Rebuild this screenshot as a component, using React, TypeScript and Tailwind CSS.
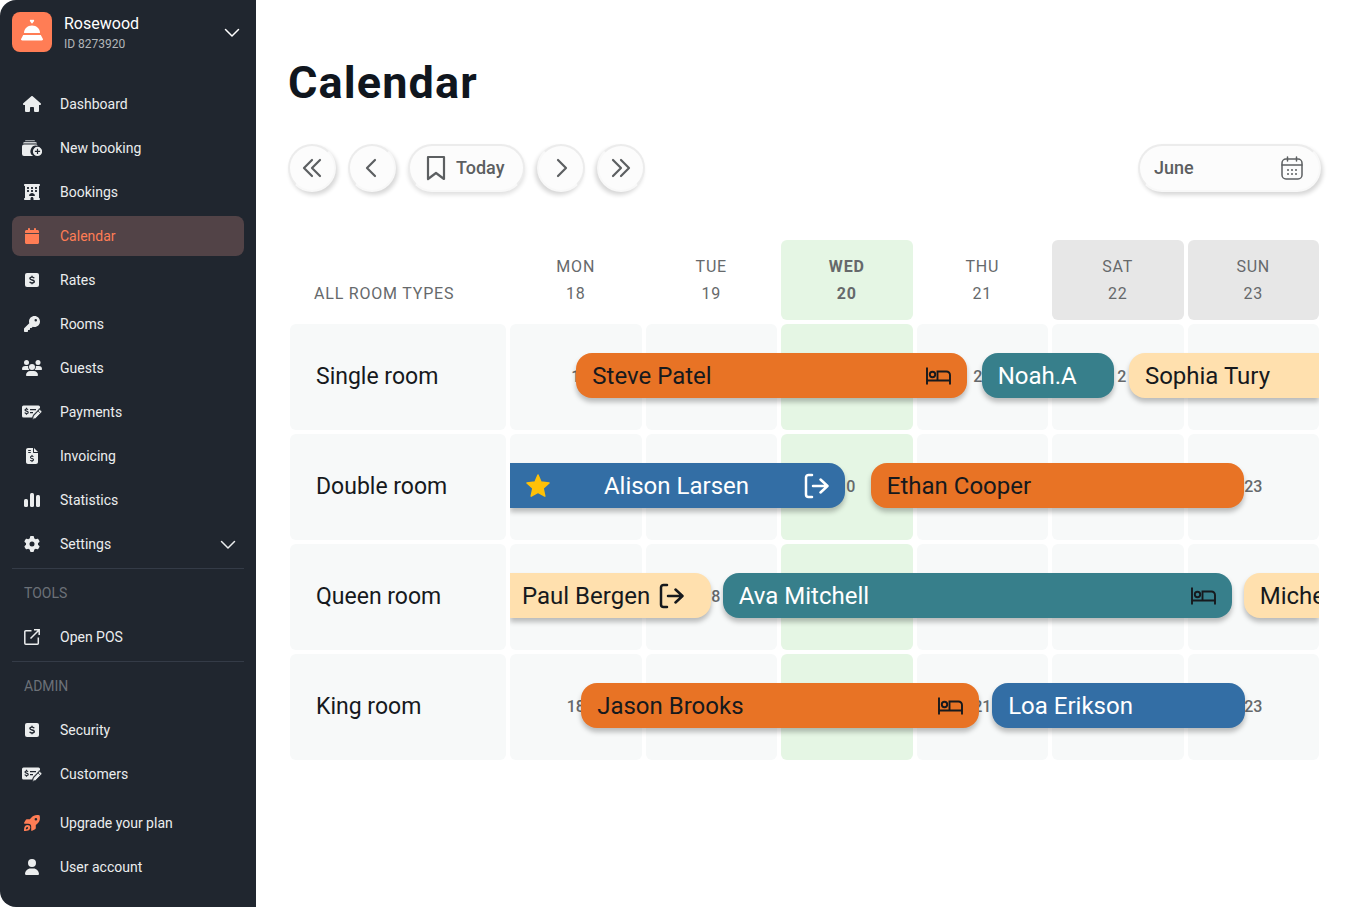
import React, { useState } from "react";
import {
  FaCalendar,
  FaFileInvoiceDollar,
  FaGear,
  FaHotel,
  FaHouse,
  FaKey,
  FaUser,
} from "react-icons/fa6";

interface IconProps {
  className?: string;
}

interface NavEntry {
  label: string;
  icon: React.ReactNode;
  active?: boolean;
  expandable?: boolean;
}

interface Booking {
  guest: string;
  start: number; // percent of the visible week
  span: number;
  color: "orange" | "teal" | "blue" | "sand";
  startsBefore?: boolean;
  endsAfter?: boolean;
  starred?: boolean;
  inHouse?: boolean;
  checkOut?: boolean;
}

interface RoomRow {
  name: string;
  days: string[];
  bookings: Booking[];
}

const ChevronDown: React.FC<IconProps> = ({ className }) => (
  <svg viewBox="0 0 16 16" className={className} fill="none" stroke="currentColor" strokeWidth="1.5" strokeLinecap="round" strokeLinejoin="round">
    <path d="M1.5 5.500 8 12l6.500-6.500" />
  </svg>
);

const BellIcon: React.FC<IconProps> = ({ className }) => (
  <svg viewBox="0 0 24 24" className={className} fill="currentColor">
    <path d="M12 5.800 10 3.200C9.300 2 10.800 1.200 12 2.100c1.200-.9 2.700-.1 2 1.100Z" />
    <path d="M4 15C4 10.700 7.400 7.400 12 7.400s8 3.300 8 7.600Z" />
    <path d="M3.200 17h17.600l2 3.800c.5 1-.1 1.700-1.200 1.700H2.400c-1.100 0-1.700-.7-1.200-1.700Z" />
  </svg>
);

const NewBookingIcon: React.FC<IconProps> = ({ className }) => (
  <svg viewBox="0 0 20 16" className={className} fill="currentColor">
    <path d="M4 0h8a1 1 0 0 1 1 1v.2H3V1a1 1 0 0 1 1-1Z" opacity=".6" />
    <path d="M2.500 2h11A1.500 1.500 0 0 1 15 3.500V3.600H1v-.1A1.500 1.500 0 0 1 2.500 2Z" opacity=".85" />
    <path d="M2 4.600h12a2 2 0 0 1 1.600 1.200A5.600 5.600 0 0 0 11.200 16H2a2 2 0 0 1-2-2V6.600a2 2 0 0 1 2-2Z" />
    <path fillRule="evenodd" d="M15.500 6.800a4.600 4.600 0 1 1 0 9.200 4.600 4.600 0 0 1 0-9.200Zm-.6 2v2h-2v1.200h2v2h1.200v-2h2v-1.200h-2v-2Z" />
  </svg>
);

const RateIcon: React.FC<IconProps> = ({ className }) => (
  <svg viewBox="0 0 14 14" className={className}>
    <rect width="14" height="14" rx="2" fill="currentColor" />
    <path d="M9.200 5.200C8.900 4.400 8.100 4.100 7 4.100c-1.300 0-2.100.5-2.100 1.400C4.900 7.500 9.300 6.500 9.300 8.500c0 .9-.9 1.400-2.300 1.400-1.200 0-2-.4-2.300-1.200M7 2.700v1.400M7 9.900v1.400" fill="none" stroke="#20262f" strokeWidth="1.400" />
  </svg>
);

const GuestsIcon: React.FC<IconProps> = ({ className }) => (
  <svg viewBox="0 0 20 16" className={className} fill="currentColor">
    <circle cx="4.500" cy="2.500" r="2.500" />
    <circle cx="16" cy="2.500" r="2.500" />
    <circle cx="10" cy="7" r="3" />
    <path d="M3.300 6h2.500c.2 0 .3 0 .4.100A4.200 4.200 0 0 0 7.300 10H.7C.3 10 0 9.700 0 9.300A3.300 3.300 0 0 1 3.300 6ZM16.700 6h-2.500c-.2 0-.3 0-.4.100A4.200 4.200 0 0 1 12.700 10h6.600c.4 0 .7-.3.700-.7A3.300 3.300 0 0 0 16.700 6ZM8.200 11h3.600A4.200 4.200 0 0 1 16 15.200c0 .5-.4.8-.8.8H4.800c-.4 0-.8-.3-.8-.8A4.200 4.200 0 0 1 8.200 11Z" />
  </svg>
);

const PaymentIcon: React.FC<IconProps> = ({ className }) => (
  <svg viewBox="0 0 20 16" className={className} fill="none">
    <path d="M1.500 1.500h15A1.500 1.500 0 0 1 18 3v1l-7 7-.6 2.500H1.500A1.500 1.500 0 0 1 0 12V3a1.500 1.500 0 0 1 1.500-1.500Z" fill="currentColor" />
    <path d="M6 5.700C5.700 5.200 5.200 5 4.500 5 3.600 5 3 5.400 3 6c0 1.500 3.200.9 3.200 2.400 0 .7-.7 1.100-1.700 1.100-.8 0-1.400-.3-1.700-.9M4.500 3.800V5M4.500 9.500v1.200M8 5.600h6M8 8.600h3" stroke="#20262f" strokeWidth="1.200" />
    <path d="m17.300 4.800 2.400 2.400a1 1 0 0 1 0 1l-6 6.200-3.200 1 .8-3.400 5.800-6Z" fill="currentColor" stroke="#20262f" strokeWidth=".8" />
    <path d="m15.800 6.700 2.200 2.200" stroke="#20262f" strokeWidth=".8" />
  </svg>
);

const StatsIcon: React.FC<IconProps> = ({ className }) => (
  <svg viewBox="0 0 16 14" className={className} fill="currentColor">
    <rect x="0" y="6" width="4" height="8" rx="1.500" />
    <rect x="6" y="0" width="4" height="14" rx="1.500" />
    <rect x="12" y="2" width="4" height="12" rx="1.500" />
  </svg>
);

const OpenIcon: React.FC<IconProps> = ({ className }) => (
  <svg viewBox="0 0 16 16" className={className} fill="none" stroke="currentColor" strokeWidth="1.500">
    <path d="M7.500 1.700H1.800a1 1 0 0 0-1 1v11.500a1 1 0 0 0 1 1h11.500a1 1 0 0 0 1-1V8.500M10 .8h5.200V6M15 1 6.500 9.500" />
  </svg>
);

const RocketIcon: React.FC<IconProps> = ({ className }) => (
  <svg viewBox="0 0 16 16" className={className} fill="currentColor" fillRule="evenodd">
    <path d="M15.300.3c.2 0 .4.200.4.400.7 3.500-.1 6-2.400 8.100l-1.500 1.300v3c0 .500-.3.900-.7 1.100l-2.900 1.600c-.5.300-1-.1-1-.6v-3.500c0-2-1-3-3-3H.7c-.5 0-.9-.5-.6-1L1.700 4.900c.2-.4.6-.7 1.100-.7h3L7.200 2.700C9.300.4 11.800-.4 15.300.3ZM11.900 2.900a1.300 1.300 0 1 0 0 2.600 1.300 1.300 0 0 0 0-2.600Z" />
    <path d="M1.100 10.900c1.300-1.300 3.300-1.300 4.400-.3 1.100 1.100 1.100 3.100-.3 4.400C4.100 15.900 1.800 16 0 16c0-1.800.1-4.100 1.100-5.100Zm1.300 1.500c-.4.400-.6 1.200-.6 1.900.7 0 1.500-.2 1.900-.6.500-.5.400-1.100.1-1.400-.3-.3-.9-.4-1.400.1Z" />
  </svg>
);

const BedIcon: React.FC<IconProps> = ({ className }) => (
  <svg viewBox="0 0 26 20" className={className} fill="none" stroke="currentColor" strokeWidth="1.900">
    <path d="M2 1.500v17M2 14.500h23M25 18.500V9a3.500 3.500 0 0 0-3.500-3.500h-9v9" />
    <circle cx="7.500" cy="8.500" r="2.700" />
  </svg>
);

const CheckOutIcon: React.FC<IconProps> = ({ className }) => (
  <svg viewBox="0 0 26 26" className={className} fill="none" stroke="currentColor" strokeWidth="2.500" strokeLinecap="round" strokeLinejoin="round">
    <path d="M9 2H5.500A2.500 2.500 0 0 0 3 4.500v17A2.500 2.500 0 0 0 5.500 24H9M10 13h14M17.500 6.500 24.500 13l-7 6.500" />
  </svg>
);

const StarIcon: React.FC<IconProps> = ({ className }) => (
  <svg viewBox="0 0 24 24" className={className} fill="currentColor" stroke="currentColor" strokeWidth="1.500" strokeLinejoin="round">
    <path d="m12 1 3 7 8 .9-5.900 5.300 1.700 7.900L12 18.300l-6.800 3.800 1.700-7.900L1 8.900 9 8Z" />
  </svg>
);

const MonthIcon: React.FC<IconProps> = ({ className }) => (
  <svg viewBox="0 0 22 24" className={className} fill="none" stroke="currentColor" strokeWidth="1.500" strokeLinecap="round">
    <rect x="1" y="3" width="20" height="20" rx="4" />
    <path d="M1 9h20M6.500 1v4M15.500 1v4" />
    <path d="M7 14h.01M11 14h.01M15 14h.01M7 18h.01M11 18h.01M15 18h.01" strokeWidth="2" />
  </svg>
);

const mainNav: NavEntry[] = [
  { label: "Dashboard", icon: <FaHouse className="size-[18px]" /> },
  { label: "New booking", icon: <NewBookingIcon className="h-4 w-5" /> },
  { label: "Bookings", icon: <FaHotel className="size-4" /> },
  { label: "Calendar", icon: <FaCalendar className="size-4" />, active: true },
  { label: "Rates", icon: <RateIcon className="size-3.5" /> },
  { label: "Rooms", icon: <FaKey className="size-4" /> },
  { label: "Guests", icon: <GuestsIcon className="h-4 w-5" /> },
  { label: "Payments", icon: <PaymentIcon className="h-4 w-5" /> },
  { label: "Invoicing", icon: <FaFileInvoiceDollar className="size-4" /> },
  { label: "Statistics", icon: <StatsIcon className="h-3.5 w-4" /> },
  { label: "Settings", icon: <FaGear className="size-4" />, expandable: true },
];

const toolsNav: NavEntry[] = [{ label: "Open POS", icon: <OpenIcon className="size-4" /> }];

const adminNav: NavEntry[] = [
  { label: "Security", icon: <RateIcon className="size-3.5" /> },
  { label: "Customers", icon: <PaymentIcon className="h-4 w-5" /> },
];

const accountNav: NavEntry[] = [
  { label: "Upgrade your plan", icon: <RocketIcon className="size-4 text-[#ff7d55]" /> },
  { label: "User account", icon: <FaUser className="size-4" /> },
];

const weekDays = [
  { name: "MON", date: "18" },
  { name: "TUE", date: "19" },
  { name: "WED", date: "20", today: true },
  { name: "THU", date: "21" },
  { name: "SAT", date: "22", weekend: true },
  { name: "SUN", date: "23", weekend: true },
];

const rooms: RoomRow[] = [
  {
    name: "Single room",
    days: ["1", "19", "20", "21", "\u00a0\u00a02", "23"],
    bookings: [
      { guest: "Steve Patel", start: 8.2, span: 48.3, color: "orange", inHouse: true },
      { guest: "Noah.A", start: 58.3, span: 16.4, color: "teal" },
      { guest: "Sophia Tury", start: 76.5, span: 23.5, color: "sand", endsAfter: true },
    ],
  },
  {
    name: "Double room",
    days: ["18", "19", "\u00a0\u00a00", "21", "22", "23"],
    bookings: [
      { guest: "Alison Larsen", start: 0, span: 41.4, color: "blue", startsBefore: true, starred: true, checkOut: true },
      { guest: "Ethan Cooper", start: 44.6, span: 46.1, color: "orange" },
    ],
  },
  {
    name: "Queen room",
    days: ["18", "18", "20", "21", "22", "23"],
    bookings: [
      { guest: "Paul Bergen", start: 0, span: 24.9, color: "sand", startsBefore: true, checkOut: true },
      { guest: "Ava Mitchell", start: 26.3, span: 62.9, color: "teal", inHouse: true },
      { guest: "Michelle", start: 90.7, span: 9.3, color: "sand", endsAfter: true },
    ],
  },
  {
    name: "King room",
    days: ["18", "19", "20", "21", "22", "23"],
    bookings: [
      { guest: "Jason Brooks", start: 8.8, span: 49.2, color: "orange", inHouse: true },
      { guest: "Loa Erikson", start: 59.6, span: 31.3, color: "blue" },
    ],
  },
];

const barColors = {
  orange: "bg-[#e87325] text-[#16191d]",
  teal: "bg-[#377f8b] text-white",
  blue: "bg-[#336ea5] text-white",
  sand: "bg-[#ffe0ae] text-[#16191d]",
};

const months = ["January", "February", "March", "April", "May", "June", "July", "August", "September", "October", "November", "December"];

const NavList: React.FC<{ items: NavEntry[] }> = ({ items }) => (
  <ul className="flex flex-col gap-1">
    {items.map((item) => (
      <li key={item.label}>
        <a
          href="#"
          aria-current={item.active ? "page" : undefined}
          className={`flex h-10 items-center gap-4 rounded-lg pr-2 text-sm ${
            item.active ? "bg-[#524347] text-[#ff7d55]" : "text-[#ebedee] hover:bg-white/5"
          }`}
        >
          <span className="ml-2 flex w-6 justify-center">{item.icon}</span>
          <span className="flex-1">{item.label}</span>
          {item.expandable && <ChevronDown className="size-4" />}
        </a>
      </li>
    ))}
  </ul>
);

const Sidebar: React.FC = () => (
  <aside className="flex w-64 shrink-0 flex-col rounded-l-2xl bg-[#20262f] px-3 pt-3 pb-5">
    <button type="button" className="flex h-10 items-center gap-3 pr-1 text-left text-white">
      <span className="flex size-10 items-center justify-center rounded-lg bg-[#ff7d55]">
        <BellIcon className="size-6 -translate-y-0.5" />
      </span>
      <span className="flex-1">
        <span className="block text-base leading-6">Rosewood</span>
        <span className="block text-xs leading-4 text-[#b3b6b9]">ID 8273920</span>
      </span>
      <ChevronDown className="size-4" />
    </button>

    <nav className="mt-8 flex flex-1 flex-col" aria-label="Main">
      <NavList items={mainNav} />

      {/* Tools */}
      <div className="mt-1 border-t border-[#343b47]">
        <h2 className="px-3 text-sm leading-[48px] text-[#6c7178]">TOOLS</h2>
        <NavList items={toolsNav} />
      </div>

      {/* Admin */}
      <div className="mt-1 border-t border-[#343b47]">
        <h2 className="px-3 text-sm leading-[48px] text-[#6c7178]">ADMIN</h2>
        <NavList items={adminNav} />
      </div>

      <div className="mt-auto pt-2">
        <NavList items={accountNav} />
      </div>
    </nav>
  </aside>
);

const BookingBar: React.FC<{ booking: Booking }> = ({ booking }) => {
  const { guest, color, startsBefore, endsAfter, starred, inHouse, checkOut } = booking;
  const spread = starred || inHouse;

  return (
    <button
      type="button"
      className={`absolute top-[29px] flex h-[45px] items-center gap-2 overflow-hidden text-2xl font-normal whitespace-nowrap shadow-[0_4px_5px_rgba(0,0,0,0.25)] ${
        barColors[color]
      } ${spread ? "justify-between" : ""} ${startsBefore ? "" : "rounded-l-2xl"} ${endsAfter ? "" : "rounded-r-2xl"} ${
        startsBefore && !starred ? "px-3" : "px-4"
      }`}
      style={{ left: `${booking.start}%`, width: `${booking.span}%` }}
    >
      {starred && <StarIcon className="size-6 shrink-0 text-[#ffc107]" />}
      <span>{guest}</span>
      {inHouse && <BedIcon className="h-5 w-[26px] shrink-0 text-[#16191d]" />}
      {checkOut && <CheckOutIcon className="size-[26px] shrink-0" />}
    </button>
  );
};

const Toolbar: React.FC = () => {
  const [month, setMonth] = useState("June");

  const round = "flex size-12 items-center justify-center rounded-full border-2 bg-[#fcfcfc]";
  const shadowRight = "border-[#ececec] border-r-[#f8f8f8] border-b-[#f8f8f8] shadow-[2px_3px_4px_rgba(0,0,0,0.16)]";
  const shadowLeft = "border-[#ececec] border-l-[#f8f8f8] border-b-[#f8f8f8] shadow-[-2px_3px_4px_rgba(0,0,0,0.16)]";
  const stroke = {
    fill: "none",
    stroke: "currentColor",
    strokeWidth: 2.2,
    strokeLinecap: "round" as const,
    strokeLinejoin: "round" as const,
  };

  return (
    <div className="flex items-center justify-between text-[#5c5f61]">
      <div className="flex gap-3">
        <button type="button" aria-label="Previous week" className={`${round} ${shadowRight}`}>
          <svg viewBox="0 0 24 24" className="size-6" {...stroke}>
            <path d="M12 4 4 12l8 8M20 4l-8 8 8 8" />
          </svg>
        </button>
        <button type="button" aria-label="Previous day" className={`${round} ${shadowRight}`}>
          <svg viewBox="0 0 24 24" className="size-6" {...stroke}>
            <path d="m15 4-8 8 8 8" />
          </svg>
        </button>
        <button
          type="button"
          className="flex h-12 items-center gap-2 rounded-full border-2 border-[#ececec] border-b-[#f8f8f8] bg-[#fcfcfc] pr-[18px] pl-3.5 text-lg font-medium shadow-[0_3px_4px_rgba(0,0,0,0.12)]"
        >
          <svg viewBox="0 0 24 26" className="h-[26px] w-6" {...stroke}>
            <path d="M4 2h16v22l-8-6-8 6Z" />
          </svg>
          Today
        </button>
        <button type="button" aria-label="Next day" className={`${round} ${shadowLeft}`}>
          <svg viewBox="0 0 24 24" className="size-6" {...stroke}>
            <path d="m9 4 8 8-8 8" />
          </svg>
        </button>
        <button type="button" aria-label="Next week" className={`${round} ${shadowLeft}`}>
          <svg viewBox="0 0 24 24" className="size-6" {...stroke}>
            <path d="m4 4 8 8-8 8M12 4l8 8-8 8" />
          </svg>
        </button>
      </div>

      <div className="relative">
        <select
          aria-label="Month"
          value={month}
          onChange={(e) => setMonth(e.target.value)}
          className="block h-12 w-[183px] appearance-none rounded-full border-2 border-[#ececec] border-r-[#f8f8f8] border-b-[#f8f8f8] bg-[#fcfcfc] pl-3.5 text-lg font-medium shadow-[2px_3px_4px_rgba(0,0,0,0.16)]"
        >
          {months.map((m) => (
            <option key={m}>{m}</option>
          ))}
        </select>
        <MonthIcon className="pointer-events-none absolute top-3 right-[18px] h-6 w-[22px]" />
      </div>
    </div>
  );
};

const CalendarTable: React.FC = () => (
  <div className="-mx-0.5 mt-11">
    <table className="w-full table-fixed border-separate border-spacing-1">
      <thead>
        <tr className="text-base leading-[27px] tracking-wider text-[#66696b]">
          <th scope="col" className="w-[216px] pb-[13px] pl-6 text-left align-bottom font-normal">
            ALL ROOM TYPES
          </th>
          {weekDays.map((day) => (
            <th
              key={day.date}
              scope="col"
              className={`h-20 rounded-md ${day.today ? "bg-[#e5f6e4] font-bold" : "font-normal"} ${
                day.weekend ? "bg-[#e7e7e7]" : ""
              }`}
            >
              {day.name}
              <br />
              {day.date}
            </th>
          ))}
        </tr>
      </thead>
      <tbody>
        {rooms.map((room) => (
          <tr key={room.name}>
            <th scope="row" className="h-[106px] rounded-md bg-[#f7f9f9] pl-[26px] text-left text-[23px] font-normal text-[#16191d]">
              {room.name}
            </th>
            {room.days.map((day, i) => (
              <td
                key={i}
                className={`relative rounded-md text-center text-base font-medium text-[#66696b] ${
                  weekDays[i].today ? "bg-[#e5f6e4]" : "bg-[#f7f9f9]"
                }`}
              >
                {day}
                {/* Bars start in the first day and run over the whole week */}
                {i === 0 && (
                  <div className="absolute inset-y-0 left-0 z-10 w-[calc(600%+20px)] overflow-hidden">
                    {room.bookings.map((booking) => (
                      <BookingBar key={booking.guest} booking={booking} />
                    ))}
                  </div>
                )}
              </td>
            ))}
          </tr>
        ))}
      </tbody>
    </table>
  </div>
);

const App: React.FC = () => {
  return (
    <div className="flex min-h-screen bg-white font-['Roboto',sans-serif]">
      <Sidebar />
      <main className="min-w-0 flex-1 px-8 pt-[55px]">
        <h1 className="mb-[33px] text-[45px] leading-[56px] font-bold tracking-wide text-[#10161e]">Calendar</h1>
        <Toolbar />
        <CalendarTable />
      </main>
    </div>
  );
};

export default App;
